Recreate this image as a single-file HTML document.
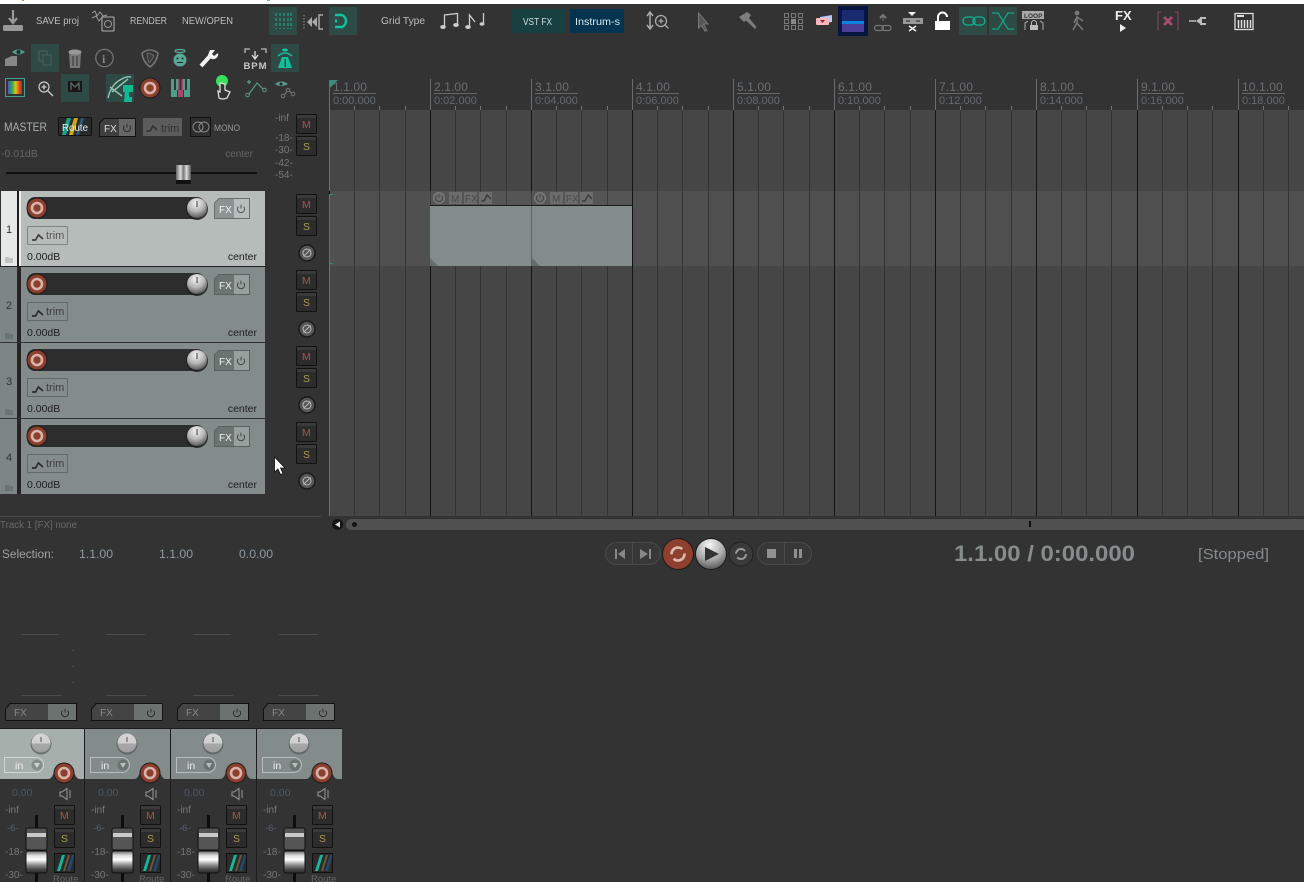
<!DOCTYPE html>
<html><head><meta charset="utf-8"><title>REAPER</title>
<style>
html,body{margin:0;padding:0;background:#333;width:1304px;height:882px;overflow:hidden}
svg{display:block;font-family:"Liberation Sans",sans-serif}
</style></head><body>
<svg width="1304" height="882" viewBox="0 0 1304 882" xmlns="http://www.w3.org/2000/svg">
<defs>
<radialGradient id="kn" cx="45%" cy="25%" r="85%"><stop offset="0" stop-color="#f4f4f4"/><stop offset=".5" stop-color="#b5b5b5"/><stop offset="1" stop-color="#3c3c3c"/></radialGradient>
<linearGradient id="mk" x1="0" y1="0" x2="0" y2="1"><stop offset="0" stop-color="#d6d6d6"/><stop offset=".5" stop-color="#cfcfcf"/><stop offset=".55" stop-color="#a9a9a9"/><stop offset="1" stop-color="#9f9f9f"/></linearGradient>
<linearGradient id="cap" x1="0" y1="0" x2="0" y2="1"><stop offset="0" stop-color="#666"/><stop offset=".2" stop-color="#ddd"/><stop offset=".4" stop-color="#fff"/><stop offset=".65" stop-color="#888"/><stop offset=".85" stop-color="#444"/><stop offset="1" stop-color="#2a2a2a"/></linearGradient>
<linearGradient id="hnd" x1="0" y1="0" x2="1" y2="0"><stop offset="0" stop-color="#666"/><stop offset=".3" stop-color="#ddd"/><stop offset=".5" stop-color="#777"/><stop offset=".7" stop-color="#ddd"/><stop offset="1" stop-color="#555"/></linearGradient>
<radialGradient id="pl" cx="45%" cy="20%" r="90%"><stop offset="0" stop-color="#f5f5f5"/><stop offset=".55" stop-color="#a8a8a8"/><stop offset="1" stop-color="#444"/></radialGradient>
<linearGradient id="spec" x1="0" y1="0" x2="1" y2="0"><stop offset="0" stop-color="#4455cc"/><stop offset=".3" stop-color="#33aa44"/><stop offset=".55" stop-color="#e0c020"/><stop offset=".8" stop-color="#e05020"/><stop offset="1" stop-color="#993322"/></linearGradient>
<g id="rec"><circle r="10.500" fill="#1c1c1c"/><circle r="9.500" fill="#8c3f2f"/><circle r="5" fill="none" stroke="#d8b3a8" stroke-width="2.600"/></g>
<g id="knob"><circle cy="1" r="11" fill="#1a1a1a" opacity=".8"/><circle r="10" fill="url(#kn)"/><rect x="-.5" y="-7" width="1" height="6" fill="#333"/></g>
<g id="btn"><rect x=".5" y=".5" width="20" height="19" rx="1" fill="#2c2c2c" stroke="#111"/><rect x="1" y="1" width="19" height="3" fill="#3a3a3a"/></g>
<g id="phase"><circle r="8" fill="#555" stroke="#1a1a1a" stroke-width="1.500"/><circle r="4" fill="none" stroke="#bbb"/><path d="M-3.500 3.500L3.500-3.500" stroke="#bbb"/></g>
<g id="power"><path d="M-2.600-2.400A3.600 3.600 0 1 0 2.600-2.400M0-4.400V-.5" fill="none" stroke="currentColor" stroke-width="1"/></g>
<g id="trimI"><path d="M3 11L6.500 11L9.500 6L14 10" fill="none" stroke="currentColor" stroke-width="1.700"/></g>
<g id="fader"><rect x="-1.500" y="0" width="3" height="67" fill="#0d0d0d"/><rect x="-10.500" y="13" width="21" height="22" rx="2" fill="#555" stroke="#111"/><rect x="-9.500" y="18" width="19" height="4" fill="#c9c9c9"/><path d="M-9 35L-5 38H5L9 35" fill="#111"/><rect x="-10.500" y="36" width="21" height="22" rx="2" fill="url(#cap)" stroke="#111"/></g>
<g id="rtbtn"><rect x=".5" y=".5" width="20" height="19" fill="#2a2a2a" stroke="#111"/><path d="M3 18L8 2H11L6 18Z" fill="#14b79a"/><path d="M9 18L14 2H16L11 18Z" fill="#6b5a3c"/><path d="M13 18L18 2H20V4L16 18Z" fill="#26486a"/></g>
</defs>

<rect width="1304" height="882" fill="#333"/>
<rect width="1304" height="4" fill="#fff"/>
<rect x="22" y="0" width="2" height="1" fill="#e08030"/>
<rect x="267" y="0" width="3" height="1" fill="#88aacc"/>

<!-- Row 1 toolbar -->
<path d="M13 10V21M9 18L13 23L17 18" fill="none" stroke="#999" stroke-width="2.200"/><rect x="3" y="25" width="20" height="6" rx="1.500" fill="#999"/>
<text x="36" y="24" font-size="10.500" fill="#bcbcbc" textLength="43" lengthAdjust="spacingAndGlyphs">SAVE proj</text>
<path d="M92 13L95 11L97 16L100 12L103 16L107 15M92 18L96 16L99 21L102 17L104 20" fill="none" stroke="#999" stroke-width="1"/><rect x="102" y="17" width="12" height="14" rx="1" fill="#333" stroke="#999" stroke-width="1.300"/><circle cx="108" cy="24" r="3.500" fill="none" stroke="#999"/>
<text x="130" y="24" font-size="10.500" fill="#bcbcbc" textLength="37" lengthAdjust="spacingAndGlyphs">RENDER</text>
<text x="182" y="24" font-size="10.500" fill="#bcbcbc" textLength="51" lengthAdjust="spacingAndGlyphs">NEW/OPEN</text>
<rect x="269" y="7" width="28" height="28" fill="#2f4a45"/>
<path d="M276 13V29M280 13V29M284 13V29M288 13V29M291 13V29" stroke="#18b596" stroke-width="1" stroke-dasharray="3 2"/>
<path d="M304 15V29" stroke="#999" stroke-dasharray="1.500 1.500"/><path d="M312 17V27L307 22ZM317 17V27L312 22Z" fill="#aaa"/><path d="M323 15H319V29H323" fill="none" stroke="#aaa" stroke-width="1.500"/>
<rect x="329" y="7" width="28" height="28" fill="#2f4a45"/>
<path d="M335 15H342A6.500 6.500 0 0 1 342 27H335" fill="none" stroke="#12c49c" stroke-width="2.400"/><rect x="335" y="19.500" width="2" height="3" fill="#12c49c"/>
<text x="381" y="24" font-size="10.500" fill="#bcbcbc" textLength="44" lengthAdjust="spacingAndGlyphs">Grid Type</text>
<g fill="none" stroke="#ccc" stroke-width="1.300"><path d="M444.500 26V15L457.500 13.500V24"/><path d="M469.500 26V15L475 22"/><path d="M483.500 24V13"/></g>
<g fill="#ccc"><ellipse cx="443" cy="27" rx="2.800" ry="2"/><ellipse cx="456" cy="25" rx="2.800" ry="2"/><ellipse cx="468" cy="27" rx="2.800" ry="2"/><ellipse cx="482" cy="24" rx="2.500" ry="1.800"/></g>
<rect x="512" y="9" width="54" height="24" fill="#184040"/><text x="523" y="25" font-size="10" fill="#cfe0e0" textLength="29" lengthAdjust="spacingAndGlyphs">VST FX</text>
<rect x="570" y="9" width="54" height="24" fill="#04344f"/><text x="575" y="25" font-size="10" fill="#d8e8f0" textLength="45" lengthAdjust="spacingAndGlyphs">Instrum-s</text>
<path d="M650 13V28M647 16L650 12L653 16M647 25L650 29L653 25" fill="none" stroke="#aaa" stroke-width="1.500"/><circle cx="661" cy="21" r="5.500" fill="none" stroke="#aaa" stroke-width="1.300"/><path d="M658.500 21H663.500M661 18.500V23.500M665 25L668.500 28.500" stroke="#aaa" stroke-width="1.300"/>
<path d="M698.500 13L708 24H703.500L707 30.500L705 31L701.500 25.500L698.500 28Z" fill="#555" stroke="#777"/>
<path d="M739 17L747 12L751 15L749 18L756.500 27L755 29L746 20.500L744 22Z" fill="#7d7d7d"/>
<g fill="none" stroke="#777"><rect x="784.500" y="13.500" width="4" height="4"/><rect x="791.500" y="13.500" width="4" height="4"/><rect x="798.500" y="13.500" width="4" height="4"/><rect x="784.500" y="19.500" width="4" height="4"/><rect x="798.500" y="19.500" width="4" height="4"/><rect x="784.500" y="25.500" width="4" height="4"/><rect x="791.500" y="25.500" width="4" height="4"/><rect x="798.500" y="25.500" width="4" height="4"/></g><rect x="791" y="19" width="5" height="5" fill="#888"/>
<path d="M820 17L832 15V22L820 24Z" fill="#b8c8f8"/><rect x="816" y="18" width="13" height="7" rx="1" fill="#f8b8c0"/><path d="M820 20H825L822.500 23Z" fill="#a02030"/>
<rect x="838" y="6" width="30" height="30" fill="#061640"/><rect x="842" y="10" width="22" height="11" fill="#1c2a70"/><rect x="842" y="21" width="22" height="3" fill="#0a84e0"/><rect x="842" y="24" width="22" height="8" fill="#4a3e98"/>
<path d="M880 18L883 15L886 18" fill="none" stroke="#777" stroke-width="2"/><path d="M883 17V21" stroke="#777"/><rect x="874.500" y="25.500" width="9" height="5" rx="2.500" fill="none" stroke="#777" stroke-width="1.200"/><rect x="882" y="25.500" width="9" height="5" rx="2.500" fill="none" stroke="#777" stroke-width="1.200"/>
<path d="M908 12H916L912 16Z" fill="#eee"/><rect x="903" y="18" width="20" height="6" fill="#999"/><path d="M906 21H910M916 21H920" stroke="#222"/><path d="M909 26L916 31M916 26L909 31" stroke="#eee" stroke-width="1.600"/>
<rect x="935" y="21" width="15" height="9" fill="#fff"/><path d="M938 21V17A4.500 4.500 0 0 1 947 17" fill="none" stroke="#fff" stroke-width="2"/>
<rect x="959" y="7" width="28" height="28" fill="#2f4a45"/>
<rect x="963" y="17" width="12" height="8" rx="4" fill="none" stroke="#12b090" stroke-width="1.300"/><rect x="973" y="17" width="12" height="8" rx="4" fill="none" stroke="#12b090" stroke-width="1.300"/>
<rect x="989" y="7" width="28" height="28" fill="#2f4a45"/>
<path d="M992 13H998L1008 29H1014M1014 13H1008L998 29H992" fill="none" stroke="#12a588" stroke-width="1.200"/>
<rect x="1022" y="11" width="22" height="8" fill="#aaa"/><text x="1024" y="18" font-size="6.500" font-weight="bold" fill="#333">LOOP</text>
<path d="M1025 30V23L1028 21M1043 30V23L1040 21" fill="none" stroke="#999" stroke-width="1.200"/><rect x="1030" y="25" width="8" height="5" fill="#bbb"/><path d="M1031.500 25V23A2.500 2.500 0 0 1 1036.500 23V25" fill="none" stroke="#bbb"/>
<circle cx="1077" cy="13" r="2.400" fill="#777"/><path d="M1077 16V23L1073 30M1077 23L1083 30M1077 17L1083 21M1077 17L1074 23" fill="none" stroke="#777" stroke-width="1.500"/>
<text x="1115" y="20" font-size="13" font-weight="bold" fill="#eee">FX</text><path d="M1120 24L1126 28L1120 32Z" fill="#eee"/>
<path d="M1161 12H1158V30M1175 12H1178V30" fill="none" stroke="#8c4a64" stroke-width="1"/><path d="M1164 17L1172 25M1172 17L1164 25" stroke="#a54a6c" stroke-width="3"/>
<path d="M1189 21H1196" stroke="#bbb" stroke-width="1.500"/><path d="M1196 21L1202 16.500V25.500Z" fill="#bbb"/><path d="M1200 18H1206M1200 24H1206" stroke="#bbb" stroke-width="2"/>
<rect x="1235" y="13.500" width="18" height="16" fill="none" stroke="#ddd" stroke-width="1.300"/><path d="M1237 16H1244" stroke="#ddd" stroke-width="2"/><path d="M1238.500 20V28M1241.500 20V28M1244.500 20V28M1247.500 20V28M1250.500 20V28" stroke="#ddd" stroke-width="1.500"/>

<!-- Row 2 -->
<path d="M5 66V59L12 56H17V66Z" fill="#888"/><path d="M12 52Q18 47 25 52Q18 57 12 52Z" fill="#4e9e8c"/><circle cx="18.500" cy="52" r="2" fill="#2a2a2a"/>
<rect x="31" y="44" width="28" height="28" fill="#2f4a45"/><rect x="39" y="51" width="8" height="10" fill="none" stroke="#465a56" stroke-width="1.300"/><rect x="43" y="55" width="8" height="10" fill="#2f4a45" stroke="#465a56" stroke-width="1.300"/>
<path d="M69 53H81L80 68H70Z" fill="#777"/><ellipse cx="75" cy="52" rx="6.500" ry="2.500" fill="#999"/><path d="M73 56V66M77 56V66" stroke="#333"/>
<circle cx="104.500" cy="58" r="8.700" fill="none" stroke="#777" stroke-width="1.200"/><text x="102" y="63" font-size="12" font-family="Liberation Serif" font-weight="bold" fill="#888">i</text>
<path d="M142 53Q150 47 158 53Q157 62 150 67Q143 62 142 53Z" fill="none" stroke="#777" stroke-width="1.500"/><path d="M147 53Q152 53 154 56Q152 60 149 63Q147 58 147 53Z" fill="#3e3e3e" stroke="#777" stroke-width=".8"/>
<ellipse cx="180" cy="51" rx="5" ry="1.500" fill="none" stroke="#58a898" stroke-width="1.200"/><circle cx="180" cy="60" r="6.500" fill="#58a898"/><circle cx="177.500" cy="58.500" r="1" fill="#222"/><circle cx="182.500" cy="58.500" r="1" fill="#222"/><path d="M177 62.500H183" stroke="#222" stroke-width="1"/>
<path d="M201 66L211 55" stroke="#f2f2f2" stroke-width="4"/><path d="M210 50L215 50L212 54L214 56L218 53A5 5 0 0 1 210 58L208 55Z" fill="#f2f2f2"/>
<path d="M245 53V49H250M266 53V49H261" fill="none" stroke="#bbb" stroke-width="1.300"/><path d="M255 51V58M252 55L255 59L258 55" fill="none" stroke="#ddd" stroke-width="1.300"/><text x="243.500" y="69" font-size="9.500" font-weight="bold" fill="#c8c8c8" textLength="23">BPM</text>
<rect x="271" y="44" width="28" height="28" fill="#2f4a45"/><ellipse cx="285" cy="50" rx="3" ry="1.500" fill="#12c09a"/><path d="M278 56Q285 50 292 56" fill="none" stroke="#12c09a" stroke-width="1.500"/><path d="M282 57H288L292 68H278Z" fill="#12c09a"/><rect x="284.500" y="59" width="1.500" height="8" fill="#2f4a45"/>

<!-- Row 3 -->
<rect x="5.500" y="78.500" width="19" height="18" fill="none" stroke="#46a090"/><rect x="8" y="81" width="14" height="13" fill="url(#spec)"/>
<circle cx="44" cy="87" r="5" fill="none" stroke="#ccc" stroke-width="1.200"/><path d="M41.500 87H46.500M44 84.500V89.500M48 91L53 96" stroke="#ccc" stroke-width="1.300"/>
<rect x="61" y="74" width="28" height="28" fill="#2f4a45"/><rect x="68" y="81" width="14" height="11" rx="1" fill="#161616"/><path d="M71 90V83L75 87L79 83V90" fill="none" stroke="#5f6a66" stroke-width="1.300"/>
<rect x="106" y="74" width="28" height="28" fill="#2f4a45"/><path d="M108 98Q111 85 120 80Q126 76 131 77M112 92L128 79M110 87L122 96" fill="none" stroke="#8cc4b4" stroke-width="1.500"/><rect x="123" y="85" width="10" height="7" fill="#12b890"/><path d="M125 90H129V97H132V102H124Z" fill="#12b890"/>
<use href="#rec" x="150" y="88"/>
<rect x="171" y="79" width="19" height="18" fill="#4e9e8c"/><rect x="178" y="79" width="5" height="18" fill="#a54a6c"/><path d="M175 79V90M180.500 79V90M186 79V90" stroke="#333" stroke-width="2"/><path d="M177.500 90V97M183.500 90V97" stroke="#333"/>
<circle cx="222" cy="81" r="6" fill="#36e05a"/><path d="M220 83V92L218 91L219 98Q222 100 227 98L230 92L225 90V84Z" fill="#333" stroke="#ddd" stroke-width="1.300"/>
<path d="M249 94L257 83L264 90M247 82L251 82M249 80L249 84" fill="none" stroke="#5a9a8c" stroke-width="1.200"/><circle cx="247.500" cy="95" r="1.800" fill="#333" stroke="#5a9a8c"/><circle cx="264.500" cy="90" r="1.800" fill="#333" stroke="#5a9a8c"/>
<path d="M275 84Q281 79 288 84Q281 88 275 84Z" fill="#5a9a8c"/><circle cx="281" cy="84" r="1.500" fill="#222"/><path d="M283 97L288 90L293 94" fill="none" stroke="#777"/><circle cx="283" cy="96" r="1.800" fill="#333" stroke="#777"/><circle cx="293" cy="94" r="1.800" fill="#333" stroke="#777"/><circle cx="288" cy="90" r="1.800" fill="#333" stroke="#777"/>

<!-- Ruler -->
<g shape-rendering="crispEdges">
<path d="M430.500 79V110M531.500 79V110M632.500 79V110M733.500 79V110M834.500 79V110M935.500 79V110M1036.500 79V110M1137.500 79V110M1238.500 79V110" stroke="#6c6c6c"/>
<path d="M354.500 106V110M379.500 106V110M405.500 106V110M455.500 106V110M480.500 106V110M506.500 106V110M556.500 106V110M581.500 106V110M607.500 106V110M657.500 106V110M682.500 106V110M708.500 106V110M758.500 106V110M783.500 106V110M809.500 106V110M859.500 106V110M884.500 106V110M910.500 106V110M960.500 106V110M985.500 106V110M1011.500 106V110M1061.500 106V110M1086.500 106V110M1111.500 106V110M1162.500 106V110M1187.500 106V110M1212.500 106V110M1263.500 106V110M1288.500 106V110" stroke="#777"/>
<path d="M333 93.500H376M434 93.500H477M535 93.500H578M636 93.500H679M737 93.500H780M838 93.500H881M939 93.500H982M1040 93.500H1083M1141 93.500H1184M1242 93.500H1285" stroke="#666"/>
</g>
<g font-size="12" fill="#6a6e72" letter-spacing=".1">
<text x="333" y="91">1.1.00</text><text x="434" y="91">2.1.00</text><text x="535" y="91">3.1.00</text><text x="636" y="91">4.1.00</text><text x="737" y="91">5.1.00</text><text x="838" y="91">6.1.00</text><text x="939" y="91">7.1.00</text><text x="1040" y="91">8.1.00</text><text x="1141" y="91">9.1.00</text><text x="1242" y="91">10.1.00</text>
</g>
<g font-size="11" fill="#646a70">
<text x="333" y="104">0:00.000</text><text x="434" y="104">0:02.000</text><text x="535" y="104">0:04.000</text><text x="636" y="104">0:06.000</text><text x="737" y="104">0:08.000</text><text x="838" y="104">0:10.000</text><text x="939" y="104">0:12.000</text><text x="1040" y="104">0:14.000</text><text x="1141" y="104">0:16.000</text><text x="1242" y="104">0:18.000</text>
</g>
<path d="M330 80H338L330 88Z" fill="#3f8c7e"/>

<!-- Arrange -->
<g shape-rendering="crispEdges">
<rect x="330" y="110" width="974" height="81" fill="#464646"/>
<rect x="330" y="191" width="974" height="75" fill="#505050"/>
<rect x="330" y="266" width="974" height="250" fill="#464646"/>
<path d="M354.500 110V516M379.500 110V516M405.500 110V516M455.500 110V516M480.500 110V516M506.500 110V516M556.500 110V516M581.500 110V516M607.500 110V516M657.500 110V516M682.500 110V516M708.500 110V516M758.500 110V516M783.500 110V516M809.500 110V516M859.500 110V516M884.500 110V516M910.500 110V516M960.500 110V516M985.500 110V516M1011.500 110V516M1061.500 110V516M1086.500 110V516M1111.500 110V516M1162.500 110V516M1187.500 110V516M1212.500 110V516M1263.500 110V516M1288.500 110V516" stroke="#343434"/>
<path d="M430.500 110V516M531.500 110V516M632.500 110V516M733.500 110V516M834.500 110V516M935.500 110V516M1036.500 110V516M1137.500 110V516M1238.500 110V516" stroke="#141414"/>
<path d="M329.500 80V516" stroke="#2f8d7e"/>
<rect x="329" y="191" width="1" height="3" fill="#111"/><rect x="330" y="194" width="3" height="1" fill="#2f8d7e"/><rect x="330" y="263" width="3" height="1" fill="#2f8d7e"/>
<rect x="430" y="191" width="202" height="15" fill="#555"/>
<path d="M430.500 191V206M531.500 191V206M455.500 191V206M480.500 191V206M506.500 191V206M556.500 191V206M581.500 191V206M607.500 191V206" stroke="#3c3c3c"/>
<rect x="430" y="205" width="203" height="1" fill="#1c1c1c"/>
<rect x="430" y="206" width="202" height="60" fill="#838c8a"/>
<rect x="531" y="206" width="1" height="60" fill="#566"/>
<rect x="632" y="206" width="1" height="60" fill="#111"/>
</g>
<path d="M430 258L438 266H430Z" fill="#666c6b"/><path d="M532 258L540 266H532Z" fill="#666c6b"/>
<!-- item headers -->
<g color="#888"><circle cx="439" cy="198" r="5.500" fill="#6c6c6c" stroke="#7c7c7c"/><use href="#power" x="439" y="198" color="#444"/>
<rect x="449" y="192" width="13" height="12" fill="#6c6c6c"/><text x="451" y="202" font-size="10" fill="#4a4a4a">M</text>
<rect x="464" y="192" width="13" height="12" fill="#6c6c6c"/><text x="465" y="202" font-size="10" fill="#4a4a4a">FX</text>
<rect x="479" y="192" width="13" height="12" fill="#6c6c6c"/><path d="M481 201L484 201L487 195L491 199" fill="none" stroke="#3e3e3e" stroke-width="1.500"/>
<circle cx="540" cy="198" r="5.500" fill="#6c6c6c" stroke="#7c7c7c"/><use href="#power" x="540" y="198" color="#444"/>
<rect x="550" y="192" width="13" height="12" fill="#6c6c6c"/><text x="552" y="202" font-size="10" fill="#4a4a4a">M</text>
<rect x="565" y="192" width="13" height="12" fill="#6c6c6c"/><text x="566" y="202" font-size="10" fill="#4a4a4a">FX</text>
<rect x="580" y="192" width="13" height="12" fill="#6c6c6c"/><path d="M582 201L585 201L588 195L592 199" fill="none" stroke="#3e3e3e" stroke-width="1.500"/></g>

<!-- scrollbar -->
<rect x="0" y="516" width="321" height="1" fill="#4a4a4a"/>
<rect x="346" y="519" width="958" height="11" rx="5" fill="#505050"/><rect x="1300" y="519" width="4" height="11" fill="#505050"/>
<rect x="1029" y="521" width="2" height="6" fill="#111"/>
<circle cx="337.500" cy="524.500" r="5.500" fill="#141414"/><path d="M340 521.500V527.500L335 524.500Z" fill="#ddd"/>
<circle cx="354.500" cy="524.500" r="2.500" fill="#141414"/>

<!-- Master -->
<text x="4" y="131" font-size="11.500" fill="#a8acae" textLength="43" lengthAdjust="spacingAndGlyphs">MASTER</text>
<rect x="58.500" y="117.500" width="33" height="18" rx="1" fill="#2a2a2a" stroke="#111"/>
<path d="M62 135L67 118H71L66 135Z" fill="#12a58c"/><path d="M69 135L74 118H78L73 135Z" fill="#c8a820"/><path d="M76 135L81 118H84L79 135Z" fill="#2c5878"/>
<text x="62" y="131" font-size="10.500" fill="#eee" textLength="26" lengthAdjust="spacingAndGlyphs">Route</text>
<path d="M99.500 123L104 118.500H135.500V136.500H99.500Z" fill="#3f3f3f" stroke="#111"/><rect x="119" y="119" width="16" height="17" fill="#666"/><text x="104" y="132" font-size="10" fill="#ddd">FX</text><use href="#power" x="127" y="128" color="#2c2c2c"/>
<rect x="143" y="118" width="39" height="18" fill="#5c5c5c"/><path d="M146 131L150 131L153 126L157 130" fill="none" stroke="#333" stroke-width="1.600"/><text x="161" y="132" font-size="11" fill="#333">trim</text>
<rect x="190.500" y="117.500" width="20" height="19" fill="#2e2e2e" stroke="#111"/><circle cx="198" cy="127" r="5" fill="none" stroke="#888"/><circle cx="204" cy="127" r="5" fill="none" stroke="#888"/>
<text x="214" y="131" font-size="9.500" fill="#999" textLength="26" lengthAdjust="spacingAndGlyphs">MONO</text>
<text x="1" y="157" font-size="10.500" fill="#666">-0.01dB</text>
<text x="253" y="157" font-size="10" fill="#666" text-anchor="end">center</text>
<rect x="6" y="172" width="251" height="2" fill="#101010"/>
<rect x="176" y="165" width="15" height="15" fill="url(#hnd)"/><rect x="176" y="180" width="15" height="4" rx="1" fill="#111"/>
<g font-size="10" fill="#777"><text x="275" y="121">-inf</text><text x="275" y="141">-18-</text><text x="275" y="153">-30-</text><text x="275" y="166">-42-</text><text x="275" y="178">-54-</text></g>
<use href="#btn" x="296" y="114"/><text x="302" y="128" font-size="10.500" fill="#a5564a">M</text>
<use href="#btn" x="296" y="136"/><text x="303" y="150" font-size="10.500" fill="#a89c4a">S</text>

<!-- Tracks -->
<g shape-rendering="crispEdges">
<rect x="0" y="266" width="266" height="1" fill="#222"/>
<rect x="1" y="191" width="16" height="75" fill="#e4e8e6"/><rect x="17" y="191" width="2" height="75" fill="#1e1e1e"/><rect x="19" y="191" width="2" height="75" fill="#eef0ef"/><rect x="21" y="191" width="244" height="75" fill="#b5bcba"/>
<rect x="0" y="267" width="17" height="75" fill="#7d8684"/><rect x="17" y="267" width="4" height="75" fill="#252525"/><rect x="21" y="267" width="244" height="75" fill="#838c8a"/>
<rect x="0" y="343" width="17" height="75" fill="#7d8684"/><rect x="17" y="343" width="4" height="75" fill="#252525"/><rect x="21" y="343" width="244" height="75" fill="#838c8a"/>
<rect x="0" y="419" width="17" height="75" fill="#7d8684"/><rect x="17" y="419" width="4" height="75" fill="#252525"/><rect x="21" y="419" width="244" height="75" fill="#838c8a"/>
</g>
<!-- track 1 -->
<rect x="27" y="197" width="178" height="22" rx="8" fill="#2d2d2d"/><use href="#rec" x="37" y="208"/><use href="#knob" x="197" y="208"/>
<path d="M214.500 203L219 198.500H249.500V218.500H214.500Z" fill="#8c9493" stroke="#68706e"/><rect x="234" y="199" width="15" height="19" fill="#b8bebc"/><text x="219" y="213" font-size="10" fill="#f4f4f4">FX</text><use href="#power" x="241" y="209" color="#555"/>
<rect x="27.500" y="226.500" width="40" height="18" rx="1" fill="#b5bcba" stroke="#7d8583"/><use href="#trimI" x="29" y="229" color="#3c3c3c"/><text x="46" y="239" font-size="11" fill="#555">trim</text>
<text x="27" y="260" font-size="10.500" fill="#1e1e1e">0.00dB</text><text x="257" y="260" font-size="10.500" fill="#1e1e1e" text-anchor="end">center</text>
<text x="6" y="233" font-size="11" fill="#333">1</text><path d="M5 263V257H9L10 258H13V263Z" fill="#bfc4c2"/>
<use href="#btn" x="296" y="194"/><text x="302" y="208" font-size="10.500" fill="#a5564a">M</text><use href="#btn" x="296" y="216"/><text x="303" y="230" font-size="10.500" fill="#a89c4a">S</text><use href="#phase" x="307" y="253"/>
<!-- track 2 -->
<rect x="27" y="273" width="178" height="22" rx="8" fill="#2d2d2d"/><use href="#rec" x="37" y="284"/><use href="#knob" x="197" y="284"/>
<path d="M214.500 279L219 274.500H249.500V294.500H214.500Z" fill="#6c7472" stroke="#5a6260"/><rect x="234" y="275" width="15" height="19" fill="#98a09e"/><text x="219" y="289" font-size="10" fill="#f0f0f0">FX</text><use href="#power" x="241" y="285" color="#444"/>
<rect x="27.500" y="302.500" width="40" height="18" rx="1" fill="#838c8a" stroke="#5f6866"/><use href="#trimI" x="29" y="305" color="#2c2c2c"/><text x="46" y="315" font-size="11" fill="#3c3c3c">trim</text>
<text x="27" y="336" font-size="10.500" fill="#1e1e1e">0.00dB</text><text x="257" y="336" font-size="10.500" fill="#1e1e1e" text-anchor="end">center</text>
<text x="6" y="309" font-size="11" fill="#333">2</text><path d="M5 339V333H9L10 334H13V339Z" fill="#6c7472"/>
<use href="#btn" x="296" y="270"/><text x="302" y="284" font-size="10.500" fill="#a5564a">M</text><use href="#btn" x="296" y="292"/><text x="303" y="306" font-size="10.500" fill="#a89c4a">S</text><use href="#phase" x="307" y="329"/>
<!-- track 3 -->
<rect x="27" y="349" width="178" height="22" rx="8" fill="#2d2d2d"/><use href="#rec" x="37" y="360"/><use href="#knob" x="197" y="360"/>
<path d="M214.500 355L219 350.500H249.500V370.500H214.500Z" fill="#6c7472" stroke="#5a6260"/><rect x="234" y="351" width="15" height="19" fill="#98a09e"/><text x="219" y="365" font-size="10" fill="#f0f0f0">FX</text><use href="#power" x="241" y="361" color="#444"/>
<rect x="27.500" y="378.500" width="40" height="18" rx="1" fill="#838c8a" stroke="#5f6866"/><use href="#trimI" x="29" y="381" color="#2c2c2c"/><text x="46" y="391" font-size="11" fill="#3c3c3c">trim</text>
<text x="27" y="412" font-size="10.500" fill="#1e1e1e">0.00dB</text><text x="257" y="412" font-size="10.500" fill="#1e1e1e" text-anchor="end">center</text>
<text x="6" y="385" font-size="11" fill="#333">3</text><path d="M5 415V409H9L10 410H13V415Z" fill="#6c7472"/>
<use href="#btn" x="296" y="346"/><text x="302" y="360" font-size="10.500" fill="#a5564a">M</text><use href="#btn" x="296" y="368"/><text x="303" y="382" font-size="10.500" fill="#a89c4a">S</text><use href="#phase" x="307" y="405"/>
<!-- track 4 -->
<rect x="27" y="425" width="178" height="22" rx="8" fill="#2d2d2d"/><use href="#rec" x="37" y="436"/><use href="#knob" x="197" y="436"/>
<path d="M214.500 431L219 426.500H249.500V446.500H214.500Z" fill="#6c7472" stroke="#5a6260"/><rect x="234" y="427" width="15" height="19" fill="#98a09e"/><text x="219" y="441" font-size="10" fill="#f0f0f0">FX</text><use href="#power" x="241" y="437" color="#444"/>
<rect x="27.500" y="454.500" width="40" height="18" rx="1" fill="#838c8a" stroke="#5f6866"/><use href="#trimI" x="29" y="457" color="#2c2c2c"/><text x="46" y="467" font-size="11" fill="#3c3c3c">trim</text>
<text x="27" y="488" font-size="10.500" fill="#1e1e1e">0.00dB</text><text x="257" y="488" font-size="10.500" fill="#1e1e1e" text-anchor="end">center</text>
<text x="6" y="461" font-size="11" fill="#333">4</text><path d="M5 491V485H9L10 486H13V491Z" fill="#6c7472"/>
<use href="#btn" x="296" y="422"/><text x="302" y="436" font-size="10.500" fill="#a5564a">M</text><use href="#btn" x="296" y="444"/><text x="303" y="458" font-size="10.500" fill="#a89c4a">S</text><use href="#phase" x="307" y="481"/>

<!-- mouse cursor -->
<path d="M274.500 457V472L278 469L280.500 474.500L283 473.500L280.500 468H285Z" fill="#fff" stroke="#111" stroke-width=".8"/>

<!-- status -->
<text x="0" y="528" font-size="10" fill="#6a6a6a" textLength="77" lengthAdjust="spacingAndGlyphs">Track 1 [FX] none</text>
<text x="2" y="558" font-size="11.500" fill="#a0a0a0" textLength="52" lengthAdjust="spacingAndGlyphs">Selection:</text>
<g font-size="11.500" fill="#8e9aa0"><text x="79" y="558" textLength="34" lengthAdjust="spacingAndGlyphs">1.1.00</text><text x="159" y="558" textLength="34" lengthAdjust="spacingAndGlyphs">1.1.00</text><text x="239" y="558" textLength="34" lengthAdjust="spacingAndGlyphs">0.0.00</text></g>

<!-- transport -->
<rect x="605.500" y="542.500" width="55" height="22" rx="11" fill="#383838" stroke="#4a4a4a"/><path d="M632.500 543V564" stroke="#4a4a4a"/>
<path d="M616 549V559" stroke="#888" stroke-width="2"/><path d="M625 549V559L618 554Z" fill="#888"/>
<path d="M650 549V559" stroke="#888" stroke-width="2"/><path d="M640 549V559L648 554Z" fill="#888"/>
<circle cx="678" cy="554" r="16" fill="#1a1a1a"/><circle cx="678" cy="554" r="15" fill="#8f3f2d"/><circle cx="678" cy="554" r="6.500" fill="none" stroke="#dcbcb0" stroke-width="2.600" stroke-dasharray="15 5"/>
<circle cx="711" cy="554" r="16" fill="#1a1a1a"/><circle cx="711" cy="554" r="15" fill="url(#pl)"/><path d="M705 547V561L719 554Z" fill="#333"/>
<circle cx="741" cy="554" r="12" fill="#3a3a3a" stroke="#222"/><circle cx="741" cy="554" r="5" fill="none" stroke="#999" stroke-width="2" stroke-dasharray="12 4"/>
<rect x="757.500" y="542.500" width="54" height="22" rx="11" fill="#383838" stroke="#4a4a4a"/><path d="M784.500 543V564" stroke="#4a4a4a"/>
<rect x="767" y="549" width="9" height="9" fill="#909090"/><rect x="794" y="549" width="3" height="9" fill="#909090"/><rect x="799" y="549" width="3" height="9" fill="#909090"/>
<text x="954" y="561" font-size="22" font-weight="bold" fill="#868b8c" textLength="181" lengthAdjust="spacingAndGlyphs">1.1.00 / 0:00.000</text>
<text x="1198" y="559" font-size="15" fill="#858a8c" textLength="71" lengthAdjust="spacingAndGlyphs">[Stopped]</text>

<!-- Mixer -->
<g stroke="#4c4c4c" shape-rendering="crispEdges"><path d="M21 634.500H59M107 634.500H145M193 634.500H231M279 634.500H317M21 695.500H61M107 695.500H147M193 695.500H233M279 695.500H319"/></g>
<g fill="#4c4c4c"><rect x="72" y="650" width="2" height="1"/><rect x="72" y="666" width="2" height="1"/><rect x="72" y="682" width="2" height="1"/></g>
<!-- strip backgrounds -->
<path d="M0 729H84V779H80Q76 779 74 772A11 11 0 0 0 54 772Q52 779 48 779H0Z" fill="#a7afad"/>
<path d="M85 729H170V779H166Q162 779 160 772A11 11 0 0 0 140 772Q138 779 134 779H85Z" fill="#838c8a"/>
<path d="M171 729H256V779H252Q248 779 246 772A11 11 0 0 0 226 772Q224 779 220 779H171Z" fill="#838c8a"/>
<path d="M257 729H342V779H338Q334 779 332 772A11 11 0 0 0 312 772Q310 779 306 779H257Z" fill="#838c8a"/>
<rect x="84" y="729" width="1" height="153" fill="#1c1c1c"/><rect x="170" y="729" width="1" height="153" fill="#1c1c1c"/><rect x="256" y="729" width="1" height="153" fill="#1c1c1c"/>
<rect x="0" y="728" width="342" height="1" fill="#1c1c1c"/>

<!-- FX buttons -->
<path d="M5.500 709L10 703.500H76.500V720.500H5.500Z" fill="#444" stroke="#111"/><rect x="48" y="704" width="28" height="16" fill="#6c7270"/><text x="14" y="716" font-size="10" fill="#888">FX</text><use href="#power" x="65" y="713" color="#2c2c2c"/>
<path d="M91.500 709L96 703.500H162.500V720.500H91.500Z" fill="#444" stroke="#111"/><rect x="134" y="704" width="28" height="16" fill="#6c7270"/><text x="100" y="716" font-size="10" fill="#888">FX</text><use href="#power" x="151" y="713" color="#2c2c2c"/>
<path d="M177.500 709L182 703.500H248.500V720.500H177.500Z" fill="#444" stroke="#111"/><rect x="220" y="704" width="28" height="16" fill="#6c7270"/><text x="186" y="716" font-size="10" fill="#888">FX</text><use href="#power" x="237" y="713" color="#2c2c2c"/>
<path d="M263.500 709L268 703.500H334.500V720.500H263.500Z" fill="#444" stroke="#111"/><rect x="306" y="704" width="28" height="16" fill="#6c7270"/><text x="272" y="716" font-size="10" fill="#888">FX</text><use href="#power" x="323" y="713" color="#2c2c2c"/>

<!-- Strip 1 -->
<g><circle cx="41" cy="744" r="10.500" fill="#6c7472"/><circle cx="41" cy="743" r="9.500" fill="url(#mk)"/><rect x="40.500" y="737" width="1" height="5" fill="#555"/>
<path d="M4.500 757.500H36A7.500 7.500 0 0 1 36 772.500H4.500Z" fill="none" stroke="#d0d4d3"/><text x="15" y="769" font-size="10.500" fill="#eee">in</text><circle cx="37" cy="765" r="5.500" fill="#858d8b"/><path d="M34 763H40L37 768Z" fill="#d0d4d3"/>
<use href="#rec" x="64" y="773"/>
<text x="12" y="796" font-size="10.500" fill="#4a5868">0.00</text>
<path d="M60 792H62L67 788.500V799.500L62 796H60ZM70 790V798" fill="none" stroke="#999"/>
<text x="5" y="813" font-size="10" fill="#777">-inf</text><text x="7" y="831" font-size="9.500" fill="#556070">-6-</text><text x="5" y="855" font-size="10" fill="#777">-18-</text><text x="5" y="878" font-size="10" fill="#777">-30-</text>
<use href="#fader" x="36.500" y="815"/>
<use href="#btn" x="54" y="805"/><text x="60" y="819" font-size="10.500" fill="#a5564a">M</text>
<use href="#btn" x="54" y="828"/><text x="61" y="842" font-size="10.500" fill="#a89c4a">S</text>
<use href="#rtbtn" x="54" y="853"/><text x="53" y="882" font-size="9.500" fill="#666">Route</text></g>
<!-- Strip 2 -->
<g><circle cx="127" cy="744" r="10.500" fill="#5f6866"/><circle cx="127" cy="743" r="9.500" fill="url(#mk)"/><rect x="126.500" y="737" width="1" height="5" fill="#555"/>
<path d="M90.500 757.500H122A7.500 7.500 0 0 1 122 772.500H90.500Z" fill="none" stroke="#b8bebc"/><text x="101" y="769" font-size="10.500" fill="#eee">in</text><circle cx="123" cy="765" r="5.500" fill="#6c7472"/><path d="M120 763H126L123 768Z" fill="#b8bebc"/>
<use href="#rec" x="150" y="773"/>
<text x="98" y="796" font-size="10.500" fill="#4a5868">0.00</text>
<path d="M146 792H148L153 788.500V799.500L148 796H146ZM156 790V798" fill="none" stroke="#999"/>
<text x="91" y="813" font-size="10" fill="#777">-inf</text><text x="93" y="831" font-size="9.500" fill="#556070">-6-</text><text x="91" y="855" font-size="10" fill="#777">-18-</text><text x="91" y="878" font-size="10" fill="#777">-30-</text>
<use href="#fader" x="122.500" y="815"/>
<use href="#btn" x="140" y="805"/><text x="146" y="819" font-size="10.500" fill="#a5564a">M</text>
<use href="#btn" x="140" y="828"/><text x="147" y="842" font-size="10.500" fill="#a89c4a">S</text>
<use href="#rtbtn" x="140" y="853"/><text x="139" y="882" font-size="9.500" fill="#666">Route</text></g>
<!-- Strip 3 -->
<g><circle cx="213" cy="744" r="10.500" fill="#5f6866"/><circle cx="213" cy="743" r="9.500" fill="url(#mk)"/><rect x="212.500" y="737" width="1" height="5" fill="#555"/>
<path d="M176.500 757.500H208A7.500 7.500 0 0 1 208 772.500H176.500Z" fill="none" stroke="#b8bebc"/><text x="187" y="769" font-size="10.500" fill="#eee">in</text><circle cx="209" cy="765" r="5.500" fill="#6c7472"/><path d="M206 763H212L209 768Z" fill="#b8bebc"/>
<use href="#rec" x="236" y="773"/>
<text x="184" y="796" font-size="10.500" fill="#4a5868">0.00</text>
<path d="M232 792H234L239 788.500V799.500L234 796H232ZM242 790V798" fill="none" stroke="#999"/>
<text x="177" y="813" font-size="10" fill="#777">-inf</text><text x="179" y="831" font-size="9.500" fill="#556070">-6-</text><text x="177" y="855" font-size="10" fill="#777">-18-</text><text x="177" y="878" font-size="10" fill="#777">-30-</text>
<use href="#fader" x="208.500" y="815"/>
<use href="#btn" x="226" y="805"/><text x="232" y="819" font-size="10.500" fill="#a5564a">M</text>
<use href="#btn" x="226" y="828"/><text x="233" y="842" font-size="10.500" fill="#a89c4a">S</text>
<use href="#rtbtn" x="226" y="853"/><text x="225" y="882" font-size="9.500" fill="#666">Route</text></g>
<!-- Strip 4 -->
<g><circle cx="299" cy="744" r="10.500" fill="#5f6866"/><circle cx="299" cy="743" r="9.500" fill="url(#mk)"/><rect x="298.500" y="737" width="1" height="5" fill="#555"/>
<path d="M262.500 757.500H294A7.500 7.500 0 0 1 294 772.500H262.500Z" fill="none" stroke="#b8bebc"/><text x="273" y="769" font-size="10.500" fill="#eee">in</text><circle cx="295" cy="765" r="5.500" fill="#6c7472"/><path d="M292 763H298L295 768Z" fill="#b8bebc"/>
<use href="#rec" x="322" y="773"/>
<text x="270" y="796" font-size="10.500" fill="#4a5868">0.00</text>
<path d="M318 792H320L325 788.500V799.500L320 796H318ZM328 790V798" fill="none" stroke="#999"/>
<text x="263" y="813" font-size="10" fill="#777">-inf</text><text x="265" y="831" font-size="9.500" fill="#556070">-6-</text><text x="263" y="855" font-size="10" fill="#777">-18-</text><text x="263" y="878" font-size="10" fill="#777">-30-</text>
<use href="#fader" x="294.500" y="815"/>
<use href="#btn" x="312" y="805"/><text x="318" y="819" font-size="10.500" fill="#a5564a">M</text>
<use href="#btn" x="312" y="828"/><text x="319" y="842" font-size="10.500" fill="#a89c4a">S</text>
<use href="#rtbtn" x="312" y="853"/><text x="311" y="882" font-size="9.500" fill="#666">Route</text></g>
</svg>
</body></html>
